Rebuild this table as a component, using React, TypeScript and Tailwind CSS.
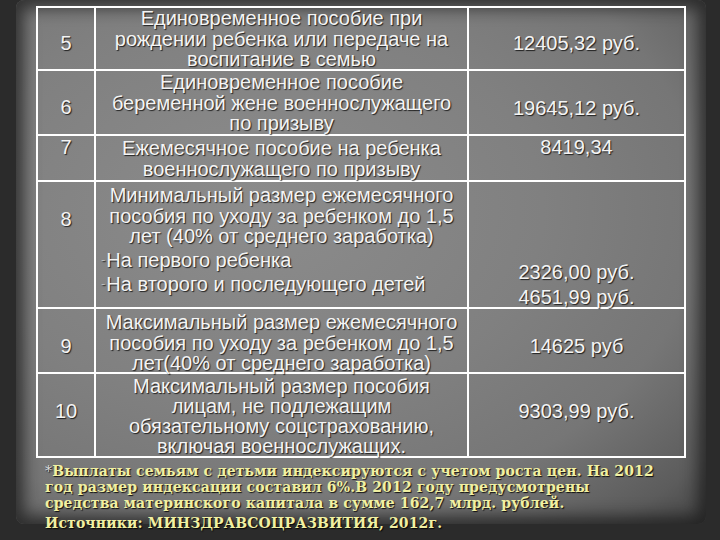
export default function App() {
  const cell = "text-[20px] leading-[20.5px] text-[#f4f4f4] [text-shadow:1px_1px_1px_rgba(0,0,0,0.75)] whitespace-nowrap";

  return (
    <div className="w-[720px] h-[540px] overflow-hidden bg-[#2b2b2b] pl-[16px] pr-[14px] pb-[16px] font-['Liberation_Sans',Arial,sans-serif]">
      <div className="h-full rounded-[8px] bg-[radial-gradient(ellipse_at_35%_40%,#8c8c8c_0%,#808080_45%,#767676_70%,#5c5c5c_90%,#444444_100%)] shadow-[inset_0_0_16px_8px_rgba(25,25,25,0.75)] pl-[20px] pt-[6px]">
        {/* table */}
        <div className={"w-[650px] border-2 border-white " + cell}>
          {/* 5 */}
          <div className="flex h-[61px]">
            <div className="w-[56px] pt-[25px] text-center">5</div>
            <div className="w-[373px] border-l-2 border-white text-center">
              Единовременное пособие при
              <br />
              рождении ребенка или передаче на
              <br />
              воспитание в семью
            </div>
            <div className="w-[217px] border-l-2 border-white pt-[25px] text-center">12405,32 руб.</div>
          </div>
          {/* 6 */}
          <div className="flex h-[65px] border-t-2 border-white">
            <div className="w-[56px] pt-[26px] text-center">6</div>
            <div className="w-[373px] border-l-2 border-white pt-[1px] text-center">
              Единовременное пособие
              <br />
              беременной жене военнослужащего
              <br />
              по призыву
            </div>
            <div className="w-[217px] border-l-2 border-white pt-[27px] text-center">19645,12 руб.</div>
          </div>
          {/* 7 */}
          <div className="flex h-[46px] border-t-2 border-white">
            <div className="w-[56px] pt-[1px] text-center">7</div>
            <div className="w-[373px] border-l-2 border-white pt-[2px] text-center">
              Ежемесячное пособие на ребенка
              <br />
              военнослужащего по призыву
            </div>
            <div className="w-[217px] border-l-2 border-white pt-[1px] text-center">8419,34</div>
          </div>
          {/* 8 */}
          <div className="flex h-[127px] border-t-2 border-white">
            <div className="w-[56px] pt-[27px] text-center">8</div>
            <div className="w-[373px] border-l-2 border-white pt-[3px]">
              <div className="text-center">
                Минимальный размер ежемесячного
                <br />
                пособия по уходу за ребенком до 1,5
                <br />
                лет (40% от среднего заработка)
              </div>
              <div className="mt-[3px] pl-[5px] flex items-center">
                <span className="text-[13px] text-[#bdbdbd] mr-[1px]">-</span>На первого ребенка
              </div>
              <div className="mt-[4px] pl-[5px] flex items-center">
                <span className="text-[13px] text-[#bdbdbd] mr-[1px]">-</span>На второго и последующего детей
              </div>
            </div>
            <div className="w-[217px] border-l-2 border-white pt-[78px] text-center leading-[24.5px]">
              2326,00 руб.
              <br />
              4651,99 руб.
            </div>
          </div>
          {/* 9 */}
          <div className="flex h-[65px] border-t-2 border-white">
            <div className="w-[56px] pt-[27px] text-center">9</div>
            <div className="w-[373px] border-l-2 border-white pt-[3px] text-center">
              Максимальный размер ежемесячного
              <br />
              пособия по уходу за ребенком до 1,5
              <br />
              лет(40% от среднего заработка)
            </div>
            <div className="w-[217px] border-l-2 border-white pt-[27px] text-center">14625 руб</div>
          </div>
          {/* 10 */}
          <div className="flex h-[84px] border-t-2 border-white">
            <div className="w-[56px] pt-[27px] text-center">10</div>
            <div className="w-[373px] border-l-2 border-white pt-[2px] text-center leading-[20px]">
              Максимальный размер пособия
              <br />
              лицам, не подлежащим
              <br />
              обязательному соцстрахованию,
              <br />
              включая военнослужащих.
            </div>
            <div className="w-[217px] border-l-2 border-white pt-[27px] text-center">9303,99 руб.</div>
          </div>
        </div>

        {/* footnote */}
        <div className="ml-[9px] mt-[5px] font-['DejaVu_Serif','Liberation_Serif',serif] font-bold text-[14px] leading-[16px] tracking-[0.15px] text-[#f1f0a2] [text-shadow:1px_1px_1px_rgba(0,0,0,0.85)] whitespace-nowrap">
          <div>
            <span className="text-[#dcdcdc] font-normal">*</span>Выплаты семьям с детьми индексируются с учетом роста цен. На 2012
          </div>
          <div>год размер индексации составил 6%.В 2012 году предусмотрены</div>
          <div>средства материнского капитала в сумме 162,7 млрд. рублей.</div>
          <div className="mt-[4px]">Источники: МИНЗДРАВСОЦРАЗВИТИЯ, 2012г.</div>
        </div>
      </div>
    </div>
  );
}
